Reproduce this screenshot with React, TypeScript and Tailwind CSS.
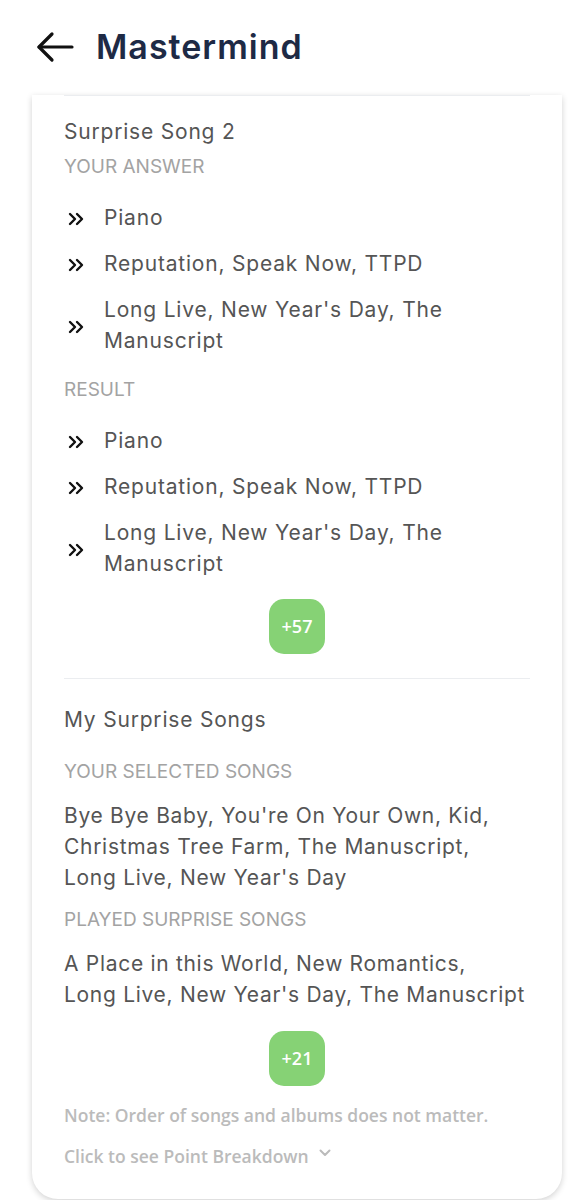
import React from 'react';

const answer = ['Piano', 'Reputation, Speak Now, TTPD', "Long Live, New Year's Day, The Manuscript"];
const result = ['Piano', 'Reputation, Speak Now, TTPD', "Long Live, New Year's Day, The Manuscript"];

const selectedSongs = ["Bye Bye Baby, You're On Your Own, Kid,", 'Christmas Tree Farm, The Manuscript,', "Long Live, New Year's Day"];
const playedSongs = ['A Place in this World, New Romantics,', "Long Live, New Year's Day, The Manuscript"];

function Chevrons() {
  return (
    <svg width="18" height="14" viewBox="0 0 18 14" fill="none" stroke="#111" strokeWidth="2.4" strokeLinecap="round" strokeLinejoin="round">
      <path d="M3 2l5 5-5 5" />
      <path d="M10 2l5 5-5 5" />
    </svg>
  );
}

function BulletList({ items }: { items: string[] }) {
  return (
    <div className="flex flex-col gap-[15px] mt-[21px]">
      {items.map((item, i) => (
        <div key={i} className="flex items-center">
          <div className="w-[40px] flex-none pl-[3px] pt-[3px]">
            <Chevrons />
          </div>
          <div className="text-[21px] leading-[31px] tracking-[0.8px] text-[#555]">{item}</div>
        </div>
      ))}
    </div>
  );
}

function SongLines({ lines }: { lines: string[] }) {
  return (
    <div className="text-[21px] leading-[31px] tracking-[0.7px] text-[#555] mt-[14px]">
      {lines.map((line, i) => (
        <div key={i} className="whitespace-nowrap">{line}</div>
      ))}
    </div>
  );
}

function Badge({ value }: { value: string }) {
  return (
    <div className="flex justify-center">
      <div className="w-[56px] h-[55px] rounded-[15px] bg-[#86d275] flex items-center justify-center text-white text-[18px] font-semibold" style={{ fontFamily: '"Open Sans", sans-serif' }}>
        {value}
      </div>
    </div>
  );
}

export default function App() {
  return (
    <div className="w-[588px] h-[1200px] bg-white overflow-hidden" style={{ fontFamily: 'Inter, "Noto Sans", sans-serif' }}>
      <div className="h-[95px] flex items-center pl-[36px] pb-[2px]">
        <svg width="38" height="32" viewBox="0 0 38 32" fill="none" stroke="#111" strokeWidth="3.2" strokeLinecap="round" strokeLinejoin="round">
          <path d="M36 16H3" />
          <path d="M16 3L3 16l13 13" />
        </svg>
        <h1 className="ml-[22px] text-[34px] font-semibold text-[#1e2a45] tracking-[1px]">Mastermind</h1>
      </div>

      <div className="ml-[32px] mr-[26px] bg-white rounded-b-[26px] shadow-[0_2px_6px_rgba(0,0,0,0.18)] px-[32px] pb-[31px]">
        <div className="border-t border-[#ebedf0] pt-[21px]">
          <div className="text-[21px] leading-[30px] tracking-[0.8px] text-[#555]">Surprise Song 2</div>
          <div className="text-[19px] leading-[28px] text-[#a3a3a3] mt-[6px]">YOUR ANSWER</div>
          <BulletList items={answer} />
          <div className="text-[19px] leading-[28px] text-[#a3a3a3] mt-[20px]">RESULT</div>
          <BulletList items={result} />
          <div className="mt-[20px]">
            <Badge value="+57" />
          </div>
        </div>

        <div className="border-t border-[#ebedf0] mt-[24px] pt-[26px]">
          <div className="text-[21px] leading-[30px] tracking-[0.8px] text-[#555]">My Surprise Songs</div>
          <div className="text-[19px] leading-[28px] text-[#a3a3a3] mt-[23px]">YOUR SELECTED SONGS</div>
          <SongLines lines={selectedSongs} />
          <div className="text-[19px] leading-[28px] text-[#a3a3a3] mt-[13px]">PLAYED SURPRISE SONGS</div>
          <SongLines lines={playedSongs} />
          <div className="mt-[21px]">
            <Badge value="+21" />
          </div>
          <div className="mt-[17px] text-[17.5px] leading-[24px] font-semibold text-[#bbbbbb]" style={{ fontFamily: '"Open Sans", sans-serif' }}>
            Note: Order of songs and albums does not matter.
          </div>
          <div className="mt-[17px] flex items-center text-[17.5px] leading-[24px] font-semibold text-[#bbbbbb]" style={{ fontFamily: '"Open Sans", sans-serif' }}>
            Click to see Point Breakdown
            <svg className="ml-[10px] mb-[6px]" width="12" height="8" viewBox="0 0 12 8" fill="none" stroke="#bbbbbb" strokeWidth="2" strokeLinecap="round" strokeLinejoin="round">
              <path d="M1.5 1.5L6 6l4.5-4.5" />
            </svg>
          </div>
        </div>
      </div>
    </div>
  );
}
